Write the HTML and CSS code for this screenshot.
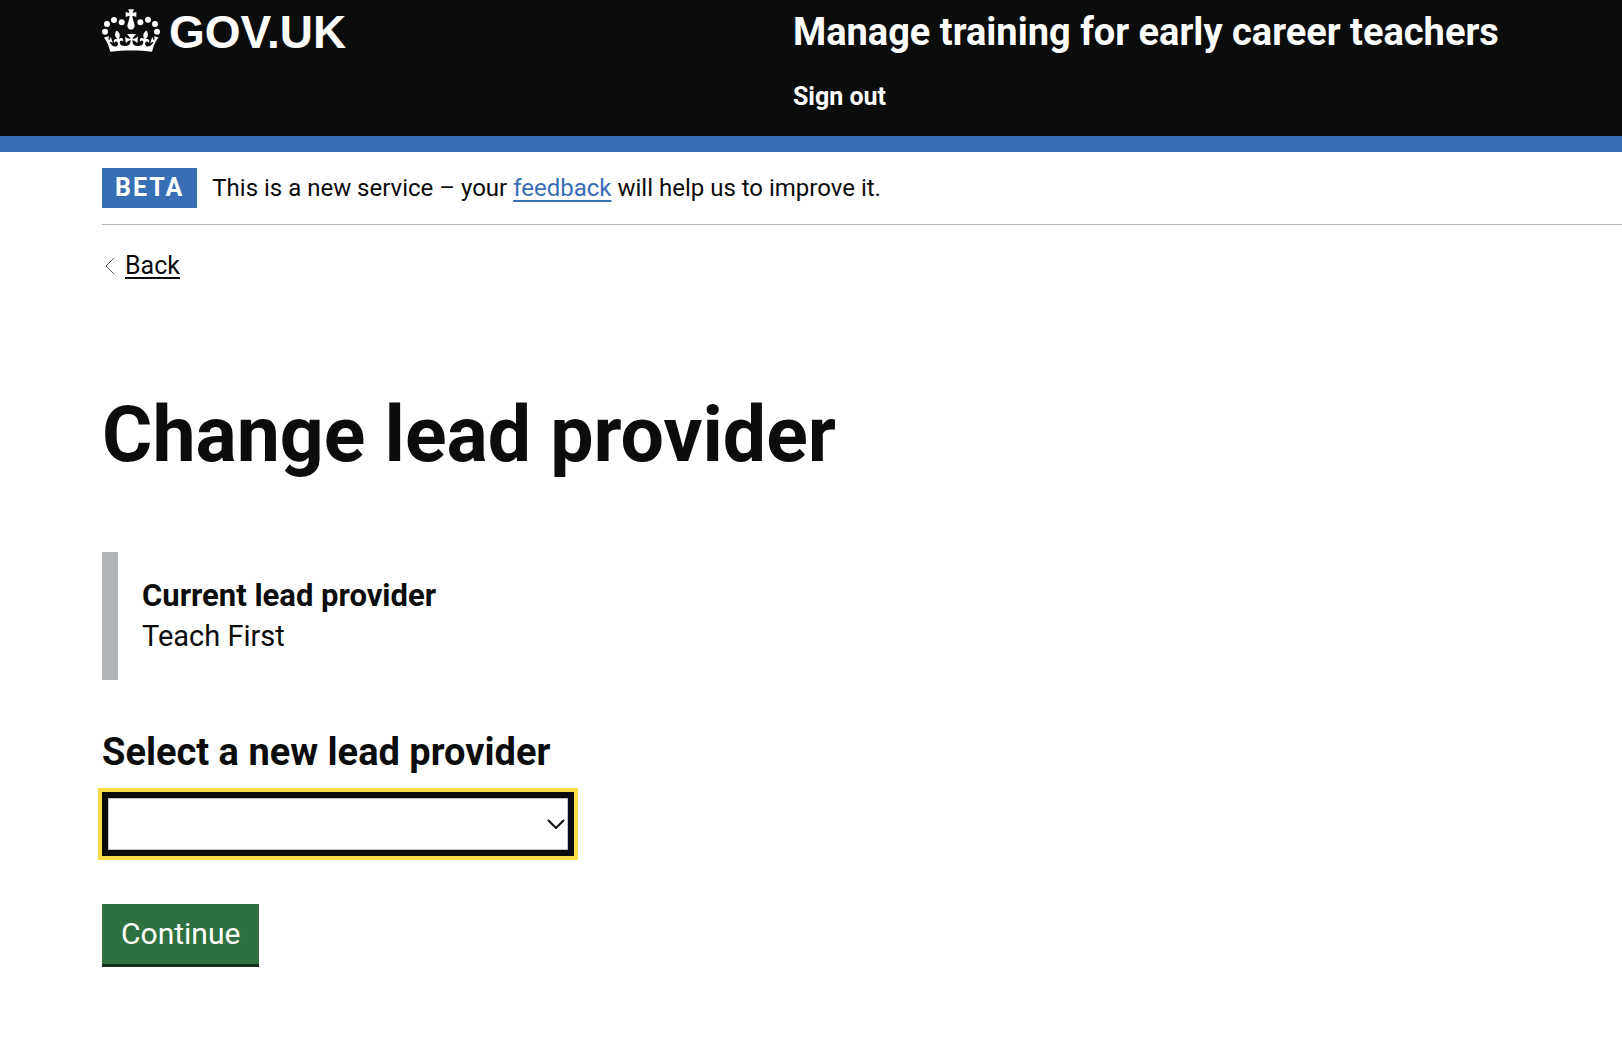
FILE: index.html
```
<!DOCTYPE html>
<html lang="en">
<head>
  <meta charset="utf-8">
  <meta name="viewport" content="width=device-width, initial-scale=1">
  <title>Change lead provider - Manage training for early career teachers - GOV.UK</title>
  <link rel="stylesheet" href="styles.css">
</head>
<body>
  <header class="header">
    <a class="header-logo" href="#">
      <svg class="crown" viewBox="36 24 174 129" aria-hidden="true" focusable="false">
        <circle cx="45" cy="92" r="9"/>
        <circle cx="51" cy="69" r="9"/>
        <circle cx="72" cy="57" r="9"/>
        <circle cx="95" cy="64" r="9"/>
        <circle cx="151" cy="64" r="9"/>
        <circle cx="174" cy="56" r="9"/>
        <circle cx="195" cy="69" r="9"/>
        <circle cx="201" cy="92" r="9"/>
        <path d="M115 25h17l-4 11 11-3v15l-11-4-1 3 6 23c3 9-3 16-10 16s-13-7-10-16l6-23-1-3-11 4v-15l11 3z"/>
        <path transform="translate(42 8) scale(5.1 4.8)" d="M16 29.2c4.4 0 8.6.3 12.3.8 1.1-4.5 2.4-7 3.7-8.8l-2.5-.9c.2 1.3.3 1.9 0 2.7-.4-.4-.8-1.1-1.1-2.3l-1.2 4c.7-.5 1.3-.8 2-.9-1.1 2.5-2.6 3.1-3.5 3-1.1-.2-1.7-1.2-1.5-2.1.3-1.2 1.5-1.5 2.1-.1 1.1-2.3-.8-3-2-2.3 1.9-1.9 2.1-3.5.6-5.6-2.1 1.6-2.1 3.2-1.2 5.5-1.2-1.4-3.2-.6-2.5 1.6.9-1.4 2.1-.5 1.9.8-.2 1.1-1.7 2.1-3.5 1.9-2.7-.2-2.9-2.1-2.9-3.6.7-.1 1.9.5 2.9 1.9l.4-4.3c-1.1 1.1-2.1 1.4-3.2 1.4.4-1.2 2.1-3 2.1-3h-5.4s1.7 1.9 2.1 3c-1.1 0-2.1-.2-3.2-1.4l.4 4.3c1-1.4 2.2-2 2.9-1.9-.1 1.5-.2 3.4-2.9 3.6-1.9.2-3.4-.8-3.5-1.9-.2-1.3 1-2.2 1.9-.8.7-2.3-1.2-3-2.5-1.6.9-2.2.9-3.9-1.2-5.5-1.5 2-1.3 3.7.6 5.6-1.2-.7-3.1 0-2 2.3.6-1.4 1.8-1.1 2.1.1.2.9-.3 1.9-1.5 2.1-.9.2-2.4-.5-3.5-3 .6 0 1.2.3 2 .9l-1.2-4c-.3 1.1-.7 1.9-1.1 2.3-.3-.8-.2-1.4 0-2.7L0 21.2c1.3 1.8 2.6 4.3 3.7 8.8 3.7-.5 7.9-.8 12.3-.8z"/>
      </svg>
      <span class="logotype">GOV.UK</span>
    </a>
    <div class="header-content">
      <a class="service-name" href="#">Manage training for early career teachers</a>
      <nav class="header-nav" aria-label="Menu"><a href="#">Sign out</a></nav>
    </div>
  </header>

  <div class="container">
    <div class="phase-banner">
      <strong class="tag">BETA</strong>
      <span>This is a new service – your <a class="link" href="#">feedback</a> will help us to improve it.</span>
    </div>

    <a class="back-link" href="#">
      <svg class="back-arrow" viewBox="0 0 11 18" aria-hidden="true" focusable="false"><path d="M10 1 2 9l8 8"/></svg>
      <span class="back-text">Back</span>
    </a>

    <main>
      <h1 class="heading">Change lead provider</h1>
      <div class="inset">
        <strong class="inset-title">Current lead provider</strong>
        <p class="inset-text">Teach First</p>
      </div>
      <form>
        <label class="label" for="lead-provider">Select a new lead provider</label>
        <div class="select-wrap">
          <select class="select" id="lead-provider" name="lead-provider">
            <option value=""></option>
            <option>Teach First</option>
          </select>
          <svg class="select-arrow" viewBox="0 0 18 10" aria-hidden="true" focusable="false"><path d="m1 1 8 8 8-8"/></svg>
        </div>
        <button class="button" type="submit">Continue</button>
      </form>
    </main>
  </div>
</body>
</html>
```
FILE: styles.css
```
* {
  box-sizing: border-box;
}

body {
  margin: 0;
  background: #fff;
  color: #0b0c0c;
  font-family: Roboto, "Liberation Sans", sans-serif;
  font-size: 24px;
  line-height: 40px;
}

a {
  color: inherit;
}

.header {
  display: grid;
  grid-template-columns: 5fr 6fr;
  padding: 8px 0 24px 102px;
  border-bottom: 16px solid #386eb5;
  background: #0b0c0c;
  color: #fff;
}

.header a {
  text-decoration: none;
}

.header-logo {
  display: flex;
  align-items: center;
  align-self: start;
  gap: 9px;
}

.crown {
  width: 58px;
  height: 43px;
  fill: currentColor;
}

.logotype {
  padding-top: 4px;
  font-family: "Liberation Sans", Arial, sans-serif;
  font-size: 46px;
  font-weight: 700;
}

.header-content {
  display: flex;
  flex-direction: column;
  align-items: flex-start;
  gap: 30px;
  padding-top: 4px;
}

.service-name {
  font-size: 38px;
  font-weight: 700;
}

.header-nav {
  font-size: 25px;
  font-weight: 700;
  line-height: 30px;
}

.container {
  padding-left: 102px;
}

.phase-banner {
  display: flex;
  gap: 15px;
  padding: 16px 0;
  border-bottom: 1px solid #b1b4b6;
}

.tag {
  padding: 0 13px;
  background: #386eb5;
  color: #fff;
  font-size: 25px;
  letter-spacing: 2px;
}

.link {
  color: #386eb5;
  text-decoration-thickness: 2px;
  text-underline-offset: 4px;
}

.back-link {
  display: inline-flex;
  align-items: center;
  gap: 10px;
  margin-top: 26px;
  padding-left: 2px;
  font-size: 25px;
  line-height: 30px;
  text-decoration: none;
}

.back-text {
  text-decoration: underline;
  text-decoration-thickness: 2px;
  text-underline-offset: 3px;
}

.back-arrow {
  width: 11px;
  height: 18px;
  fill: none;
  stroke: #505a5f;
}

main {
  padding: 108px 0 70px;
}

.heading {
  margin: 0 0 77px;
  font-size: 77px;
  line-height: 80px;
}

.inset {
  margin-bottom: 52px;
  padding: 24px;
  border-left: 16px solid #b1b4b6;
}

.inset-title {
  display: block;
  font-size: 31px;
}

.inset-text {
  margin: 0;
  font-size: 29px;
}

.label {
  display: block;
  margin-bottom: 20px;
  font-size: 38px;
  font-weight: 700;
}

.select-wrap {
  position: relative;
  width: 472px;
  max-width: 100%;
  margin-bottom: 48px;
}

.select {
  appearance: none;
  display: block;
  width: 100%;
  height: 64px;
  padding: 0 40px 0 12px;
  border: 6px solid #0b0c0c;
  border-radius: 0;
  outline: 4px solid #f7dd48;
  background: #fff;
  color: inherit;
  font: inherit;
  font-size: 29px;
  box-shadow: inset 0 0 0 1px #c4c6c7;
}

.select-arrow {
  position: absolute;
  top: 27px;
  right: 9px;
  width: 18px;
  height: 10px;
  fill: none;
  stroke: #0b0c0c;
  stroke-width: 2;
  pointer-events: none;
}

.button {
  display: block;
  padding: 10px 19px;
  border: 0;
  background: #2f7041;
  box-shadow: 0 3px 0 #12301c;
  color: #fff;
  font: inherit;
  font-size: 30px;
  line-height: 40px;
}
```
